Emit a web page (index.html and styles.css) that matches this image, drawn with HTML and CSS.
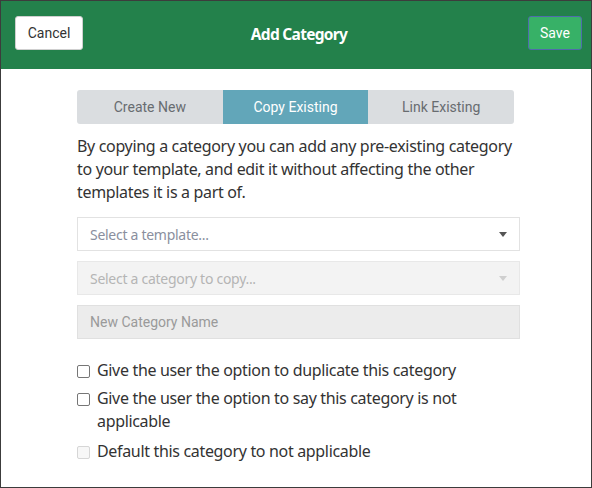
FILE: index.html
```html
<!DOCTYPE html>
<html>
<head>
<meta charset="utf-8">
<link rel="stylesheet" href="styles.css">
</head>
<body>
<div class="frame">
  <header class="topbar">
    <button class="btn btn-cancel">Cancel</button>
    <h1 class="title">Add Category</h1>
    <button class="btn btn-save">Save</button>
  </header>
  <main class="content">
    <div class="tabs">
      <div class="tab">Create New</div>
      <div class="tab tab-active">Copy Existing</div>
      <div class="tab">Link Existing</div>
    </div>
    <p class="intro">By copying a category you can add any pre-existing category to your template, and edit it without affecting the other templates it is a part of.</p>
    <div class="field select">
      <span class="placeholder">Select a template...</span>
      <span class="caret"></span>
    </div>
    <div class="field select disabled">
      <span class="placeholder">Select a category to copy...</span>
      <span class="caret"></span>
    </div>
    <div class="field input disabled-input">
      <span class="placeholder">New Category Name</span>
    </div>
    <ul class="options">
      <li class="option"><span class="box"></span><span class="label">Give the user the option to duplicate this category</span></li>
      <li class="option"><span class="box"></span><span class="label">Give the user the option to say this category is not applicable</span></li>
      <li class="option"><span class="box box-disabled"></span><span class="label">Default this category to not applicable</span></li>
    </ul>
  </main>
</div>
</body>
</html>
```
FILE: styles.css
```css
* { box-sizing: border-box; }
html, body { margin: 0; padding: 0; }
body {
  width: 592px;
  height: 488px;
  background: #ffffff;
  font-family: "Noto Sans", "Open Sans", sans-serif;
}
.frame {
  width: 592px;
  height: 488px;
  border: 1px solid #3c3c3c;
  display: flex;
  flex-direction: column;
}
.topbar {
  height: 68px;
  background: #23814b;
  display: flex;
  align-items: flex-start;
  justify-content: space-between;
  padding: 15px 9px 0 14px;
  flex-shrink: 0;
}
.btn {
  font-family: Roboto, "Liberation Sans", sans-serif;
  font-size: 14px;
  height: 34px;
  border-radius: 3px;
  padding: 0;
  cursor: pointer;
}
.btn-cancel {
  width: 68px;
  background: #ffffff;
  color: #333333;
  border: 1px solid #cfcfcf;
}
.btn-save {
  width: 54px;
  background: #37b167;
  color: #ffffff;
  border: 1px solid #4f6cab;
}
.title {
  margin: 7px 13px 0 0;
  color: #ffffff;
  font-size: 15.5px;
  letter-spacing: -0.7px;
  font-weight: 700;
  line-height: 22px;
}
.content {
  padding: 21px 71px 0 76px;
}
.tabs {
  display: flex;
  width: 437px;
  height: 34px;
  border-radius: 3px;
  overflow: hidden;
}
.tab {
  flex: 1;
  background: #dadde0;
  color: #686c70;
  font-family: Roboto, "Liberation Sans", sans-serif;
  font-size: 14px;
  display: flex;
  align-items: center;
  justify-content: center;
}
.tab-active {
  background: #62a6b9;
  color: #ffffff;
}
.intro {
  margin: 11px 0 0 0;
  font-size: 16px;
  letter-spacing: -0.33px;
  line-height: 23px;
  color: #333333;
  width: 443px;
}
.field {
  width: 443px;
  height: 34px;
  border: 1px solid #e2e2e2;
  display: flex;
  align-items: center;
  justify-content: space-between;
  padding: 0 12px 0 12px;
  margin-top: 10px;
}
.intro + .field { margin-top: 13px; }
.placeholder {
  font-size: 14px;
  letter-spacing: -0.28px;
  color: #8a8f9e;
}
.caret {
  width: 0;
  height: 0;
  border-left: 4px solid transparent;
  border-right: 4px solid transparent;
  border-top: 5px solid #555555;
}
.disabled {
  background: #f3f3f3;
  border-color: #e8e8e8;
}
.disabled .placeholder { color: #b5b5b5; }
.disabled .caret { border-top-color: #cfcfcf; }
.disabled-input {
  background: #ececec;
  border-color: #e0e0e0;
}
.disabled-input .placeholder {
  font-family: Roboto, "Liberation Sans", sans-serif;
  letter-spacing: 0;
  color: #9a9a9a;
}
.options {
  list-style: none;
  margin: 20px 0 0 0;
  padding: 0;
}
.option {
  display: flex;
  align-items: flex-start;
  margin-bottom: 5px;
}
.option:last-child { margin-top: 7px; }
.box {
  width: 13px;
  height: 13px;
  border: 1px solid #767676;
  border-radius: 2px;
  margin: 6px 7px 0 0;
  flex-shrink: 0;
  background: #fff;
}
.box-disabled {
  border-color: #d6d6d6;
  background: #f7f7f7;
}
.label {
  font-size: 16px;
  letter-spacing: -0.33px;
  line-height: 23px;
  color: #333333;
  width: 380px;
}
```
